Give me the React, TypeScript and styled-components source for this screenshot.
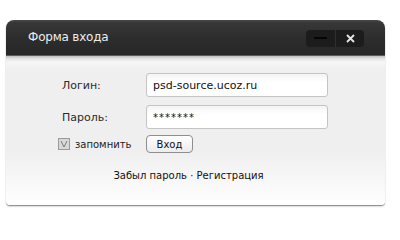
import React from "react";
import styled, { createGlobalStyle } from "styled-components";

const Global = createGlobalStyle`
  html, body { margin: 0; padding: 0; background: #fff; }
  body { width: 400px; height: 240px; overflow: hidden; font-family: "DejaVu Sans", Verdana, sans-serif; }
`;

const Window = styled.div`
  margin: 20px 0 0 6px;
  width: 379px;
  border-radius: 8px 8px 4px 4px;
  box-shadow: 0 1px 1px rgba(0,0,0,0.4), 0 2px 2px rgba(0,0,0,0.1);
`;

const Header = styled.div`
  height: 35px;
  display: flex;
  align-items: center;
  justify-content: space-between;
  padding: 0 21px 0 22px;
  border-radius: 8px 8px 0 0;
  background: linear-gradient(#474747 0px, #373737 3px, #2e2e2e 16px, #262626 100%);
  border-bottom: 1px solid #5a5a5a;
`;

const Title = styled.div`
  color: #ececec;
  font-family: "DejaVu Sans", Verdana, sans-serif;
  font-size: 12px;
  letter-spacing: -0.2px;
  padding-bottom: 1px;
`;

const Controls = styled.div`
  display: flex;
  height: 17px;
  border-radius: 4px;
  background: #1c1c1c;
  overflow: hidden;
  margin-top: 1px;
`;

const Ctl = styled.div<{ $w: number; $divider?: boolean }>`
  width: ${(p) => p.$w}px;
  display: flex;
  align-items: center;
  justify-content: center;
  border-right: ${(p) => (p.$divider ? "1px solid #2f2f2f" : "none")};
`;

const Body = styled.div`
  background: linear-gradient(#bdbdbd 0px, #e6e6e6 3px, #f6f6f6 6px, #efefef 14px, #efefef 95px, #f9f9f9 130px, #ffffff 150px);
  border-radius: 0 0 4px 4px;
  padding: 17px 0 24px 0;
  display: flex;
  flex-direction: column;
`;

const Row = styled.div<{ $mt?: number }>`
  display: flex;
  align-items: center;
  margin-top: ${(p) => p.$mt ?? 0}px;
`;

const Label = styled.div`
  width: 84px;
  padding-left: 56px;
  color: #2a2a2a;
  font-size: 11px;
`;

const Input = styled.div<{ $pw?: boolean }>`
  box-sizing: border-box;
  width: 182px;
  height: 24px;
  border: 1px solid #c4c4c4;
  border-radius: 3px;
  background: linear-gradient(#f4f4f4, #ffffff 8px);
  display: flex;
  align-items: center;
  padding-left: 6px;
  font-size: ${(p) => (p.$pw ? 10 : 11)}px;
  letter-spacing: ${(p) => (p.$pw ? 1 : 0)}px;
  color: #111;
`;

const Remember = styled.label`
  display: flex;
  align-items: center;
  width: 88px;
  padding-left: 52px;
  font-size: 10px;
  color: #222;
`;

const Check = styled.span`
  box-sizing: border-box;
  width: 12px;
  height: 12px;
  border: 1px solid #9a9a9a;
  background: #d8d8d8;
  display: inline-flex;
  align-items: center;
  justify-content: center;
  margin-right: 5px;
`;

const Button = styled.button`
  box-sizing: border-box;
  width: 47px;
  height: 18px;
  padding: 0;
  border: 1px solid #8e8e8e;
  border-radius: 4px;
  background: linear-gradient(#ffffff, #ececec);
  font-family: "DejaVu Sans", Verdana, sans-serif;
  font-size: 10px;
  color: #111;
`;

const Links = styled.div`
  margin-top: 17px;
  text-align: center;
  font-size: 10px;
  color: #111;
  padding-right: 14px;
`;

export default function App() {
  return (
    <>
      <Global />
      <Window>
        <Header>
          <Title>Форма входа</Title>
          <Controls>
            <Ctl $w={29} $divider>
              <svg width="13" height="3"><rect x="0" y="0" width="13" height="2" fill="#050505" /></svg>
            </Ctl>
            <Ctl $w={28}>
              <svg width="9" height="9" viewBox="0 0 9 9">
                <path d="M1 1 L8 8 M8 1 L1 8" stroke="#e6e6e6" strokeWidth="1.8" />
              </svg>
            </Ctl>
          </Controls>
        </Header>
        <Body>
          <Row>
            <Label>Логин:</Label>
            <Input>psd-source.ucoz.ru</Input>
          </Row>
          <Row $mt={8}>
            <Label>Пароль:</Label>
            <Input $pw>*******</Input>
          </Row>
          <Row $mt={6}>
            <Remember>
              <Check>
                <svg width="8" height="8" viewBox="0 0 8 8">
                  <path d="M1 1 L4 7 L7 1" stroke="#7a7a7a" strokeWidth="1" fill="none" />
                </svg>
              </Check>
              запомнить
            </Remember>
            <Button>Вход</Button>
          </Row>
          <Links>Забыл пароль · Регистрация</Links>
        </Body>
      </Window>
    </>
  );
}
